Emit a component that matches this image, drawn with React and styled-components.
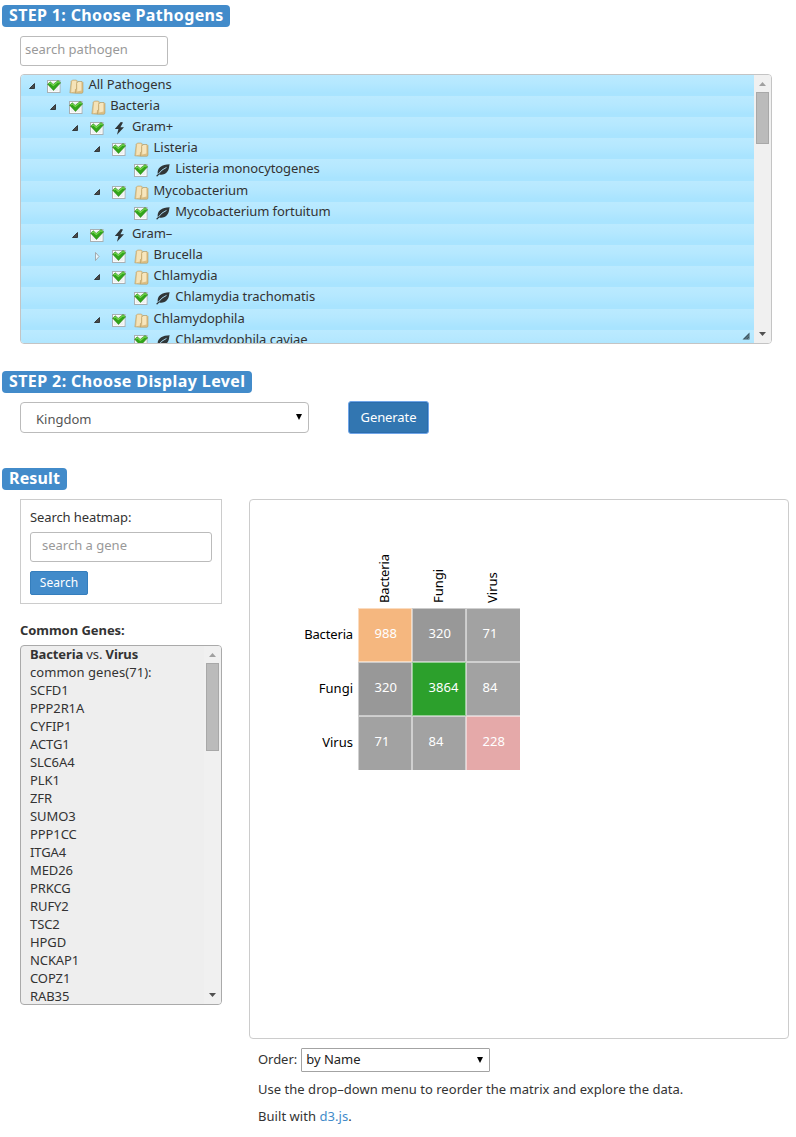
import React from "react";
import styled, { createGlobalStyle } from "styled-components";

const GlobalStyle = createGlobalStyle`
  * { box-sizing: border-box; }
  body { margin: 0; background: #fff; color: #333; font: 13px/18px "Noto Sans", sans-serif; }
  button, input { font: inherit; }
`;

const Page = styled.main`
  width: 796px;
  height: 1137px;
  overflow: hidden;
  padding: 5px 7px 0 2px;
`;

const Section = styled.section`
  height: ${(p) => p.$height}px;
`;

const SectionLabel = styled.h2`
  display: flex;
  align-items: center;
  width: ${(p) => p.$width}px;
  height: 22px;
  margin: 0;
  padding: 0 0 2px 7px;
  border-radius: 4px;
  background: #428bca;
  color: #fff;
  font-size: 16px;
  font-weight: 700;
  line-height: 20px;
  white-space: nowrap;
  letter-spacing: ${(p) => p.$spacing || 0}px;
`;

const TextField = styled.input`
  display: block;
  border: 1px solid #bbb;
  border-radius: 3px;
  height: 30px;
  width: ${(p) => p.$width}px;
  padding: 0 ${(p) => p.$inset}px 4px;
  background: #fff;
  outline: 0;
  &::placeholder { color: #999; opacity: 1; }
`;

const StepOne = styled.div`
  padding: 9px 0 0 18px;
`;

const TreeBox = styled.div`
  display: flex;
  width: 752px;
  height: 270px;
  margin-top: 8px;
  border: 1px solid #c4c4c4;
  border-radius: 4px;
  overflow: hidden;
`;

const TreeRows = styled.div`
  position: relative;
  flex: 1;
  overflow: hidden;
`;

const TreeRow = styled.div`
  display: flex;
  height: ${(p) => (p.$tall ? 22 : 21)}px;
  padding-left: ${(p) => 7.5 + p.$level * 21.7}px;
  background: linear-gradient(#bbeaff, #b5e8ff 40%, #a9e4ff 85%);
  svg { flex: none; }
`;

const RowText = styled.span`
  margin: 0 0 0 4.5px;
  line-height: 19px;
  white-space: nowrap;
  letter-spacing: ${(p) => p.$spacing}px;
`;

const IconSlot = styled.span`
  display: flex;
  width: ${(p) => p.$width}px;
  padding-top: ${(p) => p.$top}px;
  flex: none;
`;

const Grip = styled.span`
  position: absolute;
  right: 4px;
  bottom: 3px;
  line-height: 0;
`;

const ScrollTrack = styled.div`
  display: flex;
  flex-direction: column;
  align-items: center;
  width: 17px;
  flex: none;
  padding: 7px 0;
  background: #f0f0f0;
`;

const ScrollThumb = styled.div`
  width: 13px;
  height: ${(p) => p.$height}px;
  margin: 6px 0 auto;
  border: 1px solid #a8a8a8;
  background: #bbb;
`;

const Controls = styled.div`
  display: flex;
  align-items: center;
  gap: 39px;
  padding: 8px 0 0 18px;
`;

const Dropdown = styled.div`
  display: flex;
  align-items: center;
  justify-content: space-between;
  width: ${(p) => p.$width}px;
  height: ${(p) => p.$height}px;
  padding: ${(p) => p.$padding};
  border: 1px solid ${(p) => p.$border};
  border-radius: ${(p) => p.$radius}px;
  color: ${(p) => p.$color || "#222"};
  svg { margin-bottom: ${(p) => p.$lift || 0}px; }
`;

const Generate = styled.button`
  width: 81px;
  height: 33px;
  padding: 0 0 2px;
  border: 1px solid #6fa5e8;
  border-radius: 3px;
  box-shadow: inset 0 0 0 1px #2b6dac;
  background: #3276b1;
  color: #fff;
  letter-spacing: -0.1px;
`;

const Results = styled.div`
  display: flex;
  align-items: flex-start;
  padding: 9px 0 0 18px;
`;

const Sidebar = styled.aside`
  width: 202px;
  margin-right: 27px;
`;

const SearchBox = styled.div`
  height: 105px;
  padding: 8px 9px;
  border: 1px solid #ccc;
`;

const FieldLabel = styled.div`
  height: 24px;
  letter-spacing: -0.1px;
`;

const SearchButton = styled.button`
  width: 58px;
  height: 24px;
  margin-top: 9px;
  padding: 0;
  border: 1px solid #357ebd;
  border-radius: 2px;
  background: #428bca;
  color: #fff;
  font-size: 12px;
  letter-spacing: 0.1px;
`;

const GenesTitle = styled.h3`
  margin: 17px 0 6px;
  font-size: 13px;
  line-height: 18px;
  letter-spacing: -0.05px;
`;

const GeneBox = styled.div`
  display: flex;
  height: 360px;
  border: 1px solid #aaa;
  border-radius: 4px;
  background: #eee;
  overflow: hidden;
`;

const GeneList = styled.div`
  flex: 1;
  margin-top: -1px;
  padding-left: 9px;
`;

const Gene = styled.div`
  height: 18px;
  white-space: nowrap;
  letter-spacing: ${(p) => p.$spacing || 0}px;
`;

const Output = styled.div`
  width: 540px;
`;

const ChartPanel = styled.div`
  height: 540px;
  border: 1px solid #ccc;
  border-radius: 4px;
`;

const OrderRow = styled.div`
  display: flex;
  align-items: center;
  gap: 4px;
  padding: 9px 0 0 9px;
`;

const OrderLabel = styled.span`
  padding-bottom: 2px;
  letter-spacing: -0.05px;
`;

const Note = styled.p`
  margin: ${(p) => p.$gap}px 0 0 9px;
  white-space: nowrap;
  letter-spacing: ${(p) => p.$spacing || 0}px;
`;

const Link = styled.a`
  color: #428bca;
`;

const Expander = ({ open }) => (
  <svg width="7" height="9" viewBox="0 0 7 9">
    {open ? <path d="M5.5 1.5V6.5H.5Z" fill="#4a4a4a" stroke="#222" strokeWidth=".8" />
      : <path d="M1.5.5 5 4.5 1.5 8.5Z" fill="#e8f8ff" stroke="#999" strokeWidth=".8" />}
  </svg>
);

const Check = () => (
  <svg width="14" height="14" viewBox="0 0 14 14">
    <rect x=".5" y="1.5" width="12.5" height="12" fill="#eef1f2" stroke="#a9b0b4" />
    <rect x="1.5" y="2.5" width="10.5" height="10" fill="none" stroke="#fff" strokeWidth=".7" />
    <path d="M.6 5.2 3.3 2.8 6.2 5.4 11 1.5 13.7 3.8 6.5 11.5Z" fill="#32a51b" stroke="#247e14" strokeWidth=".5" />
    <path d="M1.8 5.1 3.3 3.9 6.3 6.5 11 2.6 12.5 3.7" fill="none" stroke="#77d850" strokeWidth="1.1" />
  </svg>
);

const Folder = () => (
  <svg width="15" height="15" viewBox="0 0 15 15">
    <path d="M.8 13.8 2.2 2.3 3.4 1H7.4L8.3 2V13L5.5 14.2Z" fill="#dfc48b" stroke="#b39a68" strokeWidth=".5" />
    <path d="M3.2 1.7H7.4V10.5L6 12.5 2.2 13.3Z" fill="#f5e3b8" />
    <path d="M7.7 4 9 2.5H13L14 3.5V13.4L13 14.3H6.4V10.5L7.7 9.8Z" fill="#dcbf84" stroke="#ab9159" strokeWidth=".5" />
    <path d="M8.2 4.2 9.4 3H12.4V11.6L8.2 12.5Z" fill="#f7e6bd" />
  </svg>
);

const Bolt = () => (
  <svg width="14" height="15" viewBox="0 0 14 15">
    <path d="M8.8 1 2.8 8.1H6.4L5 13.8 12 6.3H8.4L11 1.6Z" fill="#303638" />
  </svg>
);

const Leaf = () => (
  <svg width="15" height="14" viewBox="0 0 15 14">
    <path d="M0 13 1.8 11.2C.7 4.7 5.7 1.5 13.7 1.2 12.9 3.4 13.6 5 11.6 8.3 9.3 11.8 5.7 12.2 3.2 11.6L1.3 13.5Z" fill="#303638" />
    <path d="M2.5 10.9Q5.5 6.5 10.5 4.4" fill="none" stroke="#b4e7ff" strokeWidth=".9" />
  </svg>
);

const ScrollArrow = ({ down }) => (
  <svg width="7" height="4" viewBox="0 0 7 4">
    <path d={down ? "M0 0H7L3.5 4Z" : "M0 4H7L3.5 0Z"} fill={down ? "#505050" : "#a0a0a0"} />
  </svg>
);

const Caret = () => (
  <svg width="6" height="6" viewBox="0 0 6 6"><path d="M0 0H6L3 6Z" fill="#000" /></svg>
);

const Scrollbar = ({ thumb }) => (
  <ScrollTrack><ScrollArrow /><ScrollThumb $height={thumb} /><ScrollArrow down /></ScrollTrack>
);

const pathogens = [
  ["All Pathogens", 0, "folder"], ["Bacteria", 1, "folder"], ["Gram+", 2, "bolt"],
  ["Listeria", 3, "folder"], ["Listeria monocytogenes", 4, "leaf"],
  ["Mycobacterium", 3, "folder"], ["Mycobacterium fortuitum", 4, "leaf"],
  ["Gram–", 2, "bolt"], ["Brucella", 3, "folder"], ["Chlamydia", 3, "folder"],
  ["Chlamydia trachomatis", 4, "leaf"], ["Chlamydophila", 3, "folder"],
  ["Chlamydophila caviae", 4, "leaf"],
];
const tallRows = [4, 6, 10];
const icons = { folder: Folder, bolt: Bolt, leaf: Leaf };

const genes = ["SCFD1", "PPP2R1A", "CYFIP1", "ACTG1", "SLC6A4", "PLK1", "ZFR", "SUMO3", "PPP1CC", "ITGA4", "MED26", "PRKCG", "RUFY2", "TSC2", "HPGD", "NCKAP1", "COPZ1", "RAB35"];

const kingdoms = ["Bacteria", "Fungi", "Virus"];
const matrix = [
  [[988, "#f5b77f"], [320, "#989898"], [71, "#a2a2a2"]],
  [[320, "#989898"], [3864, "#2ca02c"], [84, "#a2a2a2"]],
  [[71, "#a2a2a2"], [84, "#a2a2a2"], [228, "#e5a9a9"]],
];

const Heatmap = () => (
  <svg width="538" height="538" viewBox="0 0 538 538" fontSize="13">
    {matrix.map((row, r) => row.map(([value, color], c) => (
      <g key={`${r}-${c}`}>
        <rect x={108 + c * 54} y={108 + r * 54} width="54" height="54" fill={color} fillOpacity=".5" />
        <rect x={109 + c * 54} y={109 + r * 54} width={c === 2 ? 53 : 52} height={r === 2 ? 53 : 52} fill={color} />
        <text x={124.5 + c * 54} y={138 + r * 54} fill="#fff" letterSpacing=".1">{value}</text>
      </g>
    )))}
    {kingdoms.map((name, i) => (
      <g key={name} fill="#000" letterSpacing={name === "Bacteria" ? "-.15" : "0"}>
        <text x="103" y={139 + i * 54} textAnchor="end">{name}</text>
        <text transform={`translate(${139 + i * 54} 103) rotate(-90)`}>{name}</text>
      </g>
    ))}
  </svg>
);

export default function App() {
  return (
    <Page>
      <GlobalStyle />
      <Section $height={366}>
        <SectionLabel $width={228} $spacing={0.35}>STEP 1: Choose Pathogens</SectionLabel>
        <StepOne>
          <TextField placeholder="search pathogen" $width={148} $inset={4} />
          <TreeBox>
            <TreeRows>
              {pathogens.map(([name, level, kind], i) => {
                const Icon = icons[kind];
                return (
                  <TreeRow key={name} $level={level} $tall={tallRows.includes(i)}>
                    <IconSlot $width={18.5} $top={7}>{kind !== "leaf" && <Expander open={name !== "Brucella"} />}</IconSlot>
                    <IconSlot $width={22} $top={4}><Check /></IconSlot>
                    <IconSlot $width={15} $top={4}><Icon /></IconSlot>
                    <RowText $spacing={name.length > 21 ? -0.08 : -0.04}>{name}</RowText>
                  </TreeRow>
                );
              })}
              <Grip><svg width="8" height="8" viewBox="0 0 8 8"><path d="M7.5.5V7.5H.5Z" fill="#3d5663" /><path d="M3 7.5 7.5 3M5.5 7.5 7.5 5.5" stroke="#839aa5" strokeWidth=".7" /></svg></Grip>
            </TreeRows>
            <Scrollbar thumb={52} />
          </TreeBox>
        </StepOne>
      </Section>
      <Section $height={97}>
        <SectionLabel $width={250} $spacing={0.4}>STEP 2: Choose Display Level</SectionLabel>
        <Controls>
          <Dropdown $width={289} $height={31} $padding="3px 6px 0 15px" $border="#bbb" $radius={4} $color="#555" $lift={5}>Kingdom<Caret /></Dropdown>
          <Generate>Generate</Generate>
        </Controls>
      </Section>
      <SectionLabel $width={65} $spacing={0.15}>Result</SectionLabel>
      <Results>
        <Sidebar>
          <SearchBox>
            <FieldLabel>Search heatmap:</FieldLabel>
            <TextField placeholder="search a gene" $width={182} $inset={11} />
            <SearchButton>Search</SearchButton>
          </SearchBox>
          <GenesTitle>Common Genes:</GenesTitle>
          <GeneBox>
            <GeneList>
              <Gene $spacing={-0.12}><b>Bacteria</b> vs. <b>Virus</b></Gene>
              <Gene $spacing={0.05}>common genes(71):</Gene>
              {genes.map((gene) => <Gene key={gene} $spacing={-0.1}>{gene}</Gene>)}
            </GeneList>
            <Scrollbar thumb={88} />
          </GeneBox>
        </Sidebar>
        <Output>
          <ChartPanel><Heatmap /></ChartPanel>
          <OrderRow>
            <OrderLabel>Order:</OrderLabel>
            <Dropdown $width={189} $height={24} $padding="0 6px 2px 4px" $border="#a3a3a3" $radius={1} $lift={-2}>by Name<Caret /></Dropdown>
          </OrderRow>
          <Note $gap={8} $spacing={0.03}>Use the drop–down menu to reorder the matrix and explore the data.</Note>
          <Note $gap={9} $spacing={0.05}>Built with <Link>d3.js</Link>.</Note>
        </Output>
      </Results>
    </Page>
  );
}
